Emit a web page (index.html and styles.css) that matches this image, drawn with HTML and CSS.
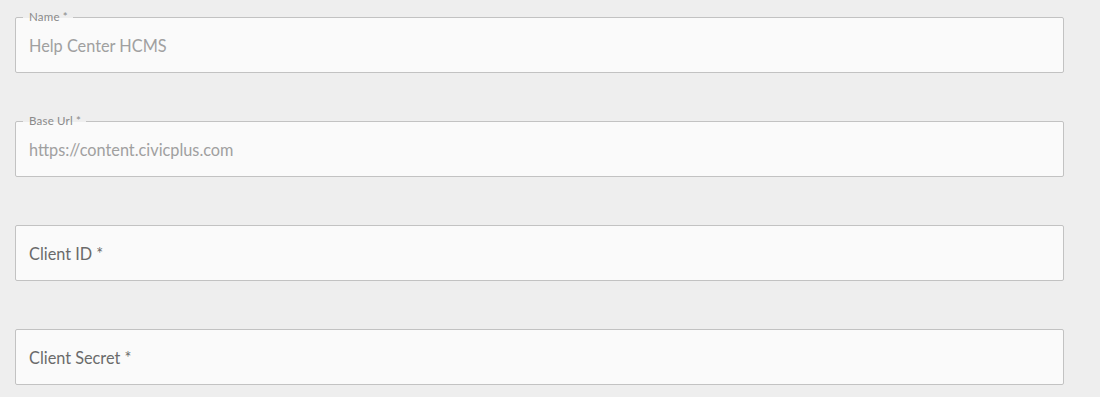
FILE: index.html
```html
<!DOCTYPE html>
<html>
<head>
<meta charset="utf-8">
<link rel="stylesheet" href="styles.css">
</head>
<body>
<div class="form">
  <div class="field filled">
    <span class="label">Name *</span>
    <span class="value">Help Center HCMS</span>
  </div>
  <div class="field filled">
    <span class="label">Base Url *</span>
    <span class="value">https://content.civicplus.com</span>
  </div>
  <div class="field">
    <span class="placeholder">Client ID *</span>
  </div>
  <div class="field">
    <span class="placeholder">Client Secret *</span>
  </div>
</div>
</body>
</html>
```

FILE: styles.css
```css
html, body {
  margin: 0;
  padding: 0;
  background: #eeeeee;
  font-family: Lato, "Liberation Sans", sans-serif;
}
.form {
  padding: 17px 0 0 15px;
  width: 1049px;
  display: flex;
  flex-direction: column;
  gap: 48px;
}
.field {
  position: relative;
  box-sizing: border-box;
  height: 56px;
  border: 1px solid #c2c2c2;
  border-radius: 2px;
  background: #fafafa;
  display: flex;
  align-items: center;
  padding-left: 13px;
}
.label {
  position: absolute;
  top: -8px;
  left: 7px;
  padding: 0 5px 0 6px;
  font-size: 11.5px;
  line-height: 14px;
  color: #8a8a8a;
  letter-spacing: 0.2px;
  background: linear-gradient(to bottom, #eeeeee 0, #eeeeee 8px, #fafafa 8px, #fafafa 100%);
}
.value {
  font-size: 16.3px;
  color: #a0a0a0;
  padding-top: 1px;
}
.placeholder {
  font-size: 16.3px;
  color: #6a6a6a;
  padding-top: 1px;
}
```
